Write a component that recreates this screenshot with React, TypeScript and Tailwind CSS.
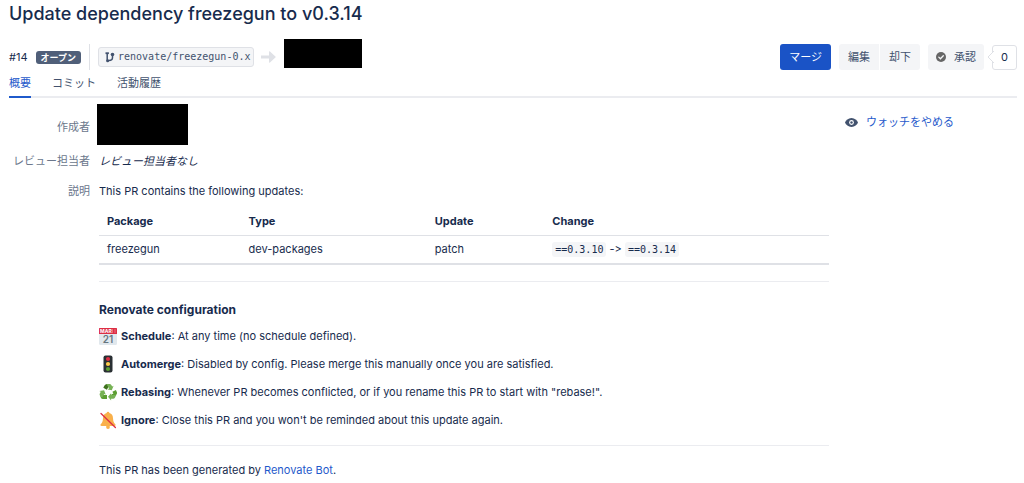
import type { ReactNode } from 'react';

function BranchIcon() {
  return (
    <svg width="10" height="12" viewBox="0 0 10 12" fill="none" stroke="#42526e" aria-hidden="true">
      <path d="M2.200 3v6.500M2.500 9.400h1.500c2 0 3.500-1 3.500-3V4.500" strokeWidth="1.500" />
      <path d="M.5 2.200h3.400" strokeWidth="1.800" />
      <circle cx="2.600" cy="9.800" r="1.500" fill="#42526e" stroke="none" />
      <circle cx="7.500" cy="3.500" r="1.800" fill="#42526e" stroke="none" />
    </svg>
  );
}

function ArrowIcon() {
  return (
    <svg width="15" height="12" viewBox="0 0 15 12" fill="#dfe1e6" aria-hidden="true">
      <path d="M0 4.400h8V0.800a.6.6 0 0 1 1-.4l5.400 5a.8.8 0 0 1 0 1.200l-5.400 5a.6.6 0 0 1-1-.4V7.600H0z" />
    </svg>
  );
}

function CheckIcon() {
  return (
    <svg width="10" height="10" viewBox="0 0 10 10" aria-hidden="true">
      <circle cx="5" cy="5" r="5" fill="#666" />
      <path d="M2.800 5.100l1.600 1.600 2.900-3" fill="none" stroke="#f4f5f7" strokeWidth="1.300" strokeLinecap="round" />
    </svg>
  );
}

function EyeIcon() {
  return (
    <svg width="13" height="9" viewBox="0 0 13 9" aria-hidden="true">
      <path d="M6.500 0C3.200 0 1 2.300 0 4.500 1 6.700 3.200 9 6.500 9S12 6.700 13 4.500C12 2.300 9.800 0 6.500 0z" fill="#42526e" />
      <circle cx="6.500" cy="4.500" r="2.400" fill="#fff" />
      <circle cx="6.500" cy="4.500" r="1.200" fill="#42526e" />
    </svg>
  );
}

function CalendarIcon() {
  return (
    <svg width="18" height="18" viewBox="0 0 18 18" aria-hidden="true" className="font-['Inter',sans-serif] font-bold">
      <rect x="0" y="1" width="18" height="17" rx="1.500" fill="#e1e8ed" />
      <path d="M0 7V1.500Q0 1 .5 1h17q.5 0 .5.5V7z" fill="#dd2e44" />
      <path d="M13 3h1M15.500 3h1M13 5h1M15.500 5h1" stroke="#f4abba" strokeWidth="1" />
      <text x="1" y="6" fontSize="5" fill="#fff">MAR</text>
      <text x="9" y="16" fontSize="10" fontWeight="600" textAnchor="middle" fill="#66757f">21</text>
    </svg>
  );
}

function TrafficLightIcon() {
  return (
    <svg width="18" height="18" viewBox="0 0 18 18" aria-hidden="true">
      <rect x="4.500" y="0.500" width="9" height="17" rx="2" fill="#292f33" />
      <circle cx="9" cy="4" r="2.100" fill="#dd2e44" />
      <circle cx="9" cy="9" r="2.100" fill="#ffcc4d" />
      <circle cx="9" cy="14" r="2.100" fill="#5c9e32" />
    </svg>
  );
}

function RecycleIcon() {
  return (
    <svg width="18" height="18" viewBox="0 0 18 18" aria-hidden="true">
      <path d="M5.300 2.800Q6.300 1 8 1h3L8.700 5.200 7.800 6.800 4.300 4.700z" fill="#3e721d" />
      <path d="M7.500 1h3.200q1 0 1.600 1l.9 1.500L14.600 2.700 12.800 7.200 8.500 6.400l1.500-.9z" fill="#77b255" />
      <path d="M13.400 8.700L16.900 6.900l.9 2q.5 1.100-.1 2.200l-1 1.700-2.600.2-2-1.700 2.300-.5z" fill="#5c9e32" />
      <path d="M17.400 11.700l-1.500 3q-.6 1-1.800 1h-2v1.800L9 13.800l3.100-3.500v1.700h3.200z" fill="#77b255" />
      <path d="M8 12v3.900H3.800q-1.200 0-1.800-1L1.300 13.300 2.800 12z" fill="#5c9e32" />
      <path d="M1.300 13.300Q.1 11.700.8 10.500L1.800 8.800.3 7.900l4.800-.7 1.700 4.500-1.500-.8L3.500 14q-.8.800-2.200-.7z" fill="#77b255" />
    </svg>
  );
}

function MutedBellIcon() {
  return (
    <svg width="18" height="18" viewBox="0 0 18 18" aria-hidden="true">
      <circle cx="9" cy="16" r="1.900" fill="#f9b04b" />
      <path d="M9 .8q1.200 0 1.400 1.300 3.500.8 3.600 5.200.1 3.600 1.200 4.800l1.300 1.500q.6 1.300-1 1.400h-13q-1.600-.1-1-1.400l1.300-1.500Q3.900 10.900 4 7.300q.1-4.400 3.600-5.200Q7.800.8 9 .8z" fill="#f9b04b" />
      <path d="M2 2.500L16.400 16.500" stroke="#dd2e44" strokeWidth="1.300" strokeLinecap="round" />
    </svg>
  );
}

const tabs = ['概要', 'コミット', '活動履歴'];

const settings: { icon: ReactNode; name: string; text: string }[] = [
  { icon: <CalendarIcon />, name: 'Schedule', text: 'At any time (no schedule defined).' },
  { icon: <TrafficLightIcon />, name: 'Automerge', text: 'Disabled by config. Please merge this manually once you are satisfied.' },
  { icon: <RecycleIcon />, name: 'Rebasing', text: 'Whenever PR becomes conflicted, or if you rename this PR to start with "rebase!".' },
  { icon: <MutedBellIcon />, name: 'Ignore', text: "Close this PR and you won't be reminded about this update again." },
];

function Code({ children }: { children: ReactNode }) {
  return (
    <code className="rounded-[3px] bg-[#f4f5f7] px-[3px] py-[2px] font-['DejaVu_Sans_Mono',monospace] text-[10px]">
      {children}
    </code>
  );
}

export default function App() {
  return (
    <div className="bg-white pr-[7px] pl-[9px] font-['Inter','Noto_Sans_CJK_JP',sans-serif] text-[11px] leading-4 text-[#172b4d]">
      <header>
        <h1 className="text-[18px] leading-7 font-medium">Update dependency freezegun to v0.3.14</h1>
        <div className="mt-[11px] flex h-9 items-center">
          <span>#14</span>
          <span className="ml-2 rounded-[3px] bg-[#505f79] px-[5px] text-[9px] leading-[13px] font-bold text-white">オープン</span>
          <span className="ml-2 h-[26px] border-l border-[#dfe1e6]" />
          <a href="#branch" className="ml-2 flex h-5 items-center gap-[3px] rounded-[3px] border border-[#dfe1e6] bg-[#f4f5f7] pr-[3px] pl-[6px] font-['DejaVu_Sans_Mono',monospace] text-[10px] text-[#42526e]">
            <BranchIcon />
            renovate/freezegun-0.x
          </a>
          <span className="mr-2 ml-[7px]"><ArrowIcon /></span>
          <span className="h-[29px] w-[78px] self-start bg-black" />
          <div className="ml-auto flex items-center text-[#42526e]">
            <button className="h-[26px] rounded-[3px] bg-[#1a53c6] px-[9px] text-white">マージ</button>
            <button className="ml-2 h-[26px] rounded-l-[3px] bg-[#f4f5f7] px-[9px]">編集</button>
            <button className="ml-px h-[26px] rounded-r-[3px] bg-[#f4f5f7] px-[9px]">却下</button>
            <button className="ml-2 flex h-[26px] items-center gap-2 rounded-[3px] bg-[#f4f5f7] px-2">
              <CheckIcon />
              承認
            </button>
            <span className="relative ml-2 flex h-[25px] w-[25px] items-center justify-center rounded-[3px] border border-[#dfe1e6] text-[#172b4d]">
              <svg className="absolute -left-[6px]" width="7" height="12" viewBox="0 0 7 12" aria-hidden="true">
                <path d="M7 0L1 6l6 6" fill="#fff" stroke="#dfe1e6" />
              </svg>
              0
            </span>
          </div>
        </div>
        <nav className="flex h-[23px] gap-[21px] border-b-2 border-[#ebecf0]">
          {tabs.map((tab, i) => (
            <a
              key={tab}
              href={`#tab-${i}`}
              className={i === 0 ? 'h-[23px] border-b-2 border-[#1f5acb] text-[#1f5acb]' : 'h-[23px] text-[#42526e]'}
            >
              {tab}
            </a>
          ))}
        </nav>
      </header>

      <div className="flex gap-4">
        <main className="min-w-0 flex-1">
          <dl className="grid grid-cols-[81px_minmax(0,1fr)] gap-x-[9px]">
            <dt className="pt-[21px] text-right text-[#6b778c]">作成者</dt>
            <dd className="-ml-[2px] pt-[6px]">
              <div className="h-[41px] w-[91px] bg-black" />
            </dd>
            <dt className="pt-2 text-right text-[#6b778c]">レビュー担当者</dt>
            <dd className="pt-2 italic">レビュー担当者なし</dd>
            <dt className="pt-[14px] text-right text-[#6b778c]">説明</dt>
            <dd className="pt-[14px]">
              <p>This PR contains the following updates:</p>
              <table className="mt-2 w-full table-fixed border-collapse text-left">
                <thead>
                  <tr className="h-7 border-b border-[#dfe1e6]">
                    <th className="w-[19.4%] px-2 font-bold">Package</th>
                    <th className="w-[25.5%] px-2 font-bold">Type</th>
                    <th className="w-[16.1%] px-2 font-bold">Update</th>
                    <th className="px-2 font-bold">Change</th>
                  </tr>
                </thead>
                <tbody>
                  <tr className="h-[29px] border-b-2 border-[#dfe1e6]">
                    <td className="px-2">freezegun</td>
                    <td className="px-2">dev-packages</td>
                    <td className="px-2">patch</td>
                    <td className="px-2 [font-feature-settings:'calt'_0]"><Code>==0.3.10</Code> -&gt; <Code>==0.3.14</Code></td>
                  </tr>
                </tbody>
              </table>
              <hr className="mt-4 border-[#ebecf0]" />
              <h2 className="mt-5 text-[12px] leading-4 font-bold">Renovate configuration</h2>
              <ul className="mt-[9px] flex flex-col gap-[10px]">
                {settings.map((s) => (
                  <li key={s.name} className="flex items-center gap-1">
                    {s.icon}
                    <p><strong className="font-bold">{s.name}</strong>: {s.text}</p>
                  </li>
                ))}
              </ul>
              <hr className="mt-4 border-[#ebecf0]" />
              <p className="mt-4">
                This PR has been generated by <a href="#renovate" className="text-[#1f5acb]">Renovate Bot</a>.
              </p>
            </dd>
          </dl>
        </main>
        <aside className="w-[172px] pt-4">
          <button className="flex items-center gap-2 text-[#1f5acb]">
            <EyeIcon />
            ウォッチをやめる
          </button>
        </aside>
      </div>
    </div>
  );
}
